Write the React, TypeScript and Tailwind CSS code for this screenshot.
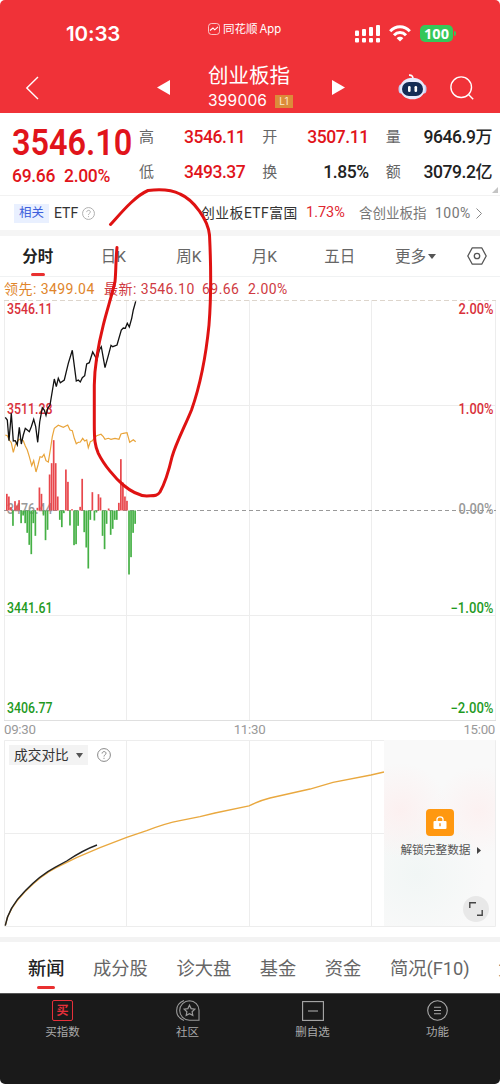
import React from 'react';
import clsx from 'clsx';

const periods = ['分时', '日K', '周K', '月K', '五日'];

const sections = ['新闻', '成分股', '诊大盘', '基金', '资金', '简况(F10)', '大事'];

const quotes = [
  { label: '高', value: '3546.11', up: true },
  { label: '开', value: '3507.11', up: true },
  { label: '量', value: '9646.9', unit: '万', up: false },
  { label: '低', value: '3493.37', up: true },
  { label: '换', value: '1.85%', up: false },
  { label: '额', value: '3079.2', unit: '亿', up: false },
];

const bars = [
  50, 42, 10, -46, 28, 15, 31, -38, -15, -38, -67, -103, -131, -38, -76, 8, 69, 50, -15, -89, -58, 108,
  142, 211, 142, 42, -28, -50, -8, 123, 86, -45, 4, -104, -101, -46, 11, 95, -65, -111, -174, -28, 55,
  -30, -6, 49, 39, -76, -116, -40, 6, -73, -55, -28, -28, 23, 154, 84, 42, 29, -192, -140, -67, -40,
];

const priceLine =
  '5.3,417.3 7.3,420 9,440.7 11.3,413.3 13.3,441 15.3,440.7 17.3,445 19.3,427.3 21.3,444 23.3,435 25.3,428.3 27.3,430 29.3,431.7 31.3,426.7 33.7,419.3 35.7,426.7 37.7,442.3 39.7,422 42.3,407.7 44.3,410 46,415.3 47.7,408.3 50,405 54.3,379 56.3,386.7 58.3,378.3 60.3,382.7 64.3,380 66.3,371.7 68.3,363.3 72.3,350.3 76.3,381 78.3,380 80.3,382 82.3,377.7 84.7,375.7 86.7,364 89.3,362.7 92.7,352 97,359.7 99.3,350 101.3,346.7 105,367.7 108.3,355.7 111,345.3 112.7,346.7 117,345 121.3,330 123.3,328 125.3,328.3 127.3,323.3 129.3,327 131.7,318.3 133.3,310 135.7,301.3';

const leadLine =
  '5.3,435 7.3,435.7 9.3,440 11.3,442.7 13.3,452.3 15.3,445 17.3,441.7 19.3,439.3 23.3,440.7 25.3,446 27.3,450 29.3,456.7 31.7,465.7 33.7,460.7 36,472 38,465 40,456.7 42,457.3 44,454.3 46,460.7 48.3,462 50.3,450 52.3,436.7 54.3,428.3 58.3,425.3 63.3,427.3 67.7,425 70,430 72.3,430.7 74.3,438.3 76.3,443.7 78.3,442.3 80.3,442 82.7,438.3 84.7,441 86.7,440 88.3,447.7 90.3,441.7 92.3,440.7 94.3,438.3 96.7,435.7 101,434.3 103.3,436.7 105,439.3 108.3,438.3 111,439.3 115,438.3 119,439.3 121,434 123.3,433.3 127,432.7 129.7,442.3 133.3,439.7 135.7,441.7';

const priceLabels = [
  { y: 314, price: '3546.11', percent: '2.00%', color: '#d9303a' },
  { y: 413.5, price: '3511.28', percent: '1.00%', color: '#d9303a' },
  { y: 513.5, price: '3476.44', percent: '0.00%', color: '#999999' },
  { y: 613, price: '3441.61', percent: '−1.00%', color: '#1f9a1f' },
  { y: 712.5, price: '3406.77', percent: '−2.00%', color: '#1f9a1f' },
];

const StatusBar: React.FC = () => (
  <div className="flex h-[58px] items-start text-white">
    <div className="ml-[66px] mt-[22px] w-[142px] font-['Inter'] text-[20.5px] leading-6 font-semibold tracking-[-0.1px]">
      10:33
    </div>
    <div className="mt-[21px] flex w-[147px] items-center gap-[3px] text-[11.5px] leading-4 whitespace-nowrap">
      <svg width="12" height="12" viewBox="0 0 12 12" fill="none" stroke="white">
        <rect x=".5" y=".5" width="11" height="11" rx="3" strokeWidth=".7" />
        <path d="M2 7.5 5 5l1.8 1.8L10 3.8" strokeWidth="1.1" />
      </svg>
      <span>
        同花顺<span className="ml-[2px] font-['Inter'] text-[11.3px]">App</span>
      </span>
    </div>
    <svg className="mt-[25px]" width="26" height="18" viewBox="0 0 26 18" fill="white">
      <rect x="0" y="5.5" width="4" height="5.5" rx="1" />
      <rect x="7" y="4" width="4" height="7" rx="1" />
      <rect x="14" y="2" width="4" height="9" rx="1" />
      <rect x="21" y="0" width="4" height="11" rx="1" />
      <rect x="0" y="13" width="4" height="4.5" rx="1" />
      <rect x="7" y="13" width="4" height="4.5" rx="1" />
      <rect x="14" y="13" width="4" height="4.5" rx="1" />
      <rect x="21" y="13" width="4" height="4.5" rx="1" />
    </svg>
    <svg className="mt-[25px] ml-2" width="22" height="17" viewBox="0 0 22 17" fill="none" stroke="white" strokeWidth="3">
      <path d="M1.2 6.2C6.8.4 15.2.4 20.8 6.2" />
      <path d="M5 10.2c3.4-3.5 8.6-3.5 12 0" />
      <path d="M7.7 13.2c1.9-1.9 4.7-1.9 6.6 0L11 16.6z" fill="white" stroke="none" />
    </svg>
    <div className="mt-[25px] ml-[9px] flex h-[17px] w-[33px] items-center justify-center rounded-[5px] bg-[#35c759] font-['Open_Sans'] text-[14.5px] font-bold">
      100
    </div>
    <div className="mt-[31px] ml-px h-[5px] w-[2px] rounded-r bg-[#35c759]" />
  </div>
);

const TitleBar: React.FC = () => (
  <div className="flex h-[55px] items-start text-white">
    <svg className="mt-[18px] ml-[25px]" width="14" height="24" viewBox="0 0 14 24" fill="none" stroke="white" strokeWidth="1.4">
      <path d="M13 1 1.8 12 13 23" />
    </svg>
    <svg className="mt-[22px] ml-[118px]" width="13" height="15" viewBox="0 0 13 15" fill="white">
      <path d="M13 0v15L0 7.5z" />
    </svg>
    <div className="mt-[5px] ml-[38px] w-[124px]">
      <div className="text-[20.5px] leading-[26px]">创业板指</div>
      <div className="flex items-center font-['Inter'] text-[15.5px] leading-[24px] tracking-[0.2px]">
        <span className="w-[67px]">399006</span>
        <span className="flex h-[13px] w-[18px] items-center justify-center bg-[#dc8b3a] text-[10px] leading-none text-[#ffe9c9]">
          L1
        </span>
      </div>
    </div>
    <svg className="mt-[22px]" width="13" height="15" viewBox="0 0 13 15" fill="white">
      <path d="M0 0v15l13-7.5z" />
    </svg>
    <svg className="mt-[15px] ml-[53px]" width="29" height="28" viewBox="0 0 29 28">
      <path d="M15 5.500c0-2.400-1.400-3.600-4-3.400" fill="none" stroke="#fff" strokeWidth="1.6" />
      <ellipse cx="3" cy="16" rx="2.5" ry="4.500" fill="#c4cdf2" />
      <ellipse cx="26" cy="16" rx="2.500" ry="4.500" fill="#c4cdf2" />
      <ellipse cx="14.500" cy="15.500" rx="12.500" ry="10.800" fill="#e6eafc" />
      <rect x="4" y="9" width="21" height="14" rx="7" fill="#142c55" />
      <rect x="10" y="13" width="2.600" height="6" rx="1.200" fill="#fff" />
      <rect x="16.500" y="13" width="2.600" height="6" rx="1.200" fill="#fff" />
    </svg>
    <svg className="mt-[18px] ml-[23px]" width="24" height="24" viewBox="0 0 24 24" fill="none" stroke="white" strokeWidth="1.4">
      <circle cx="11.2" cy="11.2" r="10.3" />
      <path d="m18.5 18.5 4.7 4.7" />
    </svg>
  </div>
);

const QuotePanel: React.FC = () => (
  <div className="relative flex h-[82px] pl-3">
    <div className="w-[127px] text-[#e1141b]">
      <div className="mt-[9px] h-[40px] origin-left scale-x-[.865] text-[37.5px] leading-[40px] font-semibold whitespace-nowrap">
        3546.10
      </div>
      <div className="mt-[4px] flex gap-[10px] text-[17.5px] leading-5 font-medium tracking-[-0.3px]">
        <span className="w-[42px]">69.66</span>
        <span>2.00%</span>
      </div>
    </div>
    <div className="mt-[7px] grid h-[70px] w-[353px] grid-cols-3 gap-x-[17px]">
      {quotes.map((q) => (
        <div key={q.label} className="flex h-[35px] items-center justify-between whitespace-nowrap">
          <span className="text-[15px] text-[#666]">{q.label}</span>
          <span
            className={clsx(
              'text-[17.5px] font-medium tracking-[-0.45px]',
              q.up ? 'text-[#e1141b]' : 'text-[#222]'
            )}
          >
            {q.value}
            {q.unit && <span className="text-[17px]">{q.unit}</span>}
          </span>
        </div>
      ))}
    </div>
    <svg className="absolute right-[2px] bottom-[2px]" width="6" height="6" viewBox="0 0 6 6" fill="#c4c4c4">
      <path d="M6 0v6H0z" />
    </svg>
  </div>
);

const HelpIcon: React.FC<{ size: number; color: string }> = ({ size, color }) => (
  <svg width={size} height={size} viewBox="0 0 14 14" fill="none" stroke={color} strokeWidth="1">
    <circle cx="7" cy="7" r="6.4" />
    <path d="M5.1 5.5C5.1 3 9 3 9 5.3 9 6.8 7 6.8 7 8.5M7 9.8v1.1" />
  </svg>
);

const RelatedEtf: React.FC = () => (
  <div className="flex h-[35px] items-center border-t border-[#f2f2f2] pl-[14px] text-[13.5px] whitespace-nowrap text-[#333]">
    <span className="flex h-[19px] w-[35px] items-center justify-center bg-[#e9f0ff] text-[12.5px] text-[#3c5fdc]">相关</span>
    <span className="ml-[5px] w-[28px] text-[14px]">ETF</span>
    <HelpIcon size={13} color="#aaa" />
    <span className="ml-[106px] w-[105px] text-[13.8px] tracking-[0.5px]">创业板ETF富国</span>
    <span className="w-[53px] text-[14.5px] text-[#df2730]">1.73%</span>
    <span className="w-[76px] text-[#777]">含创业板指</span>
    <span className="w-[41px] text-[14px] tracking-[0.5px] text-[#777]">100%</span>
    <svg width="6" height="11" viewBox="0 0 6 11" fill="none" stroke="#888">
      <path d="m.5.5 5 5-5 5" />
    </svg>
  </div>
);

const PeriodTabs: React.FC = () => (
  <div className="flex h-[41px] border-b border-[#f0f2f3] text-[15.5px] text-[#666]">
    {periods.map((p, i) => (
      <div key={p} className="flex w-[75.5px] flex-col items-center">
        <span className={clsx('mt-[9px] leading-6', i === 0 && 'font-bold text-[#222]')}>{p}</span>
        {i === 0 && <span className="mt-[4px] h-[3px] w-[14px] rounded-full bg-[#e93030]" />}
      </div>
    ))}
    <div className="mt-[9px] flex h-6 w-[76px] items-center justify-center gap-[2px] leading-6">
      更多
      <svg className="-mt-[2px]" width="8" height="5" viewBox="0 0 8 5" fill="#555">
        <path d="M0 0h8L4 5z" />
      </svg>
    </div>
    <svg className="mt-[11px] ml-[13px]" width="20" height="18" viewBox="0 0 20 18" fill="none" stroke="#555" strokeWidth="1.3">
      <path d="M5.3.8h9.4L19.2 9l-4.5 8.2H5.3L.8 9z" strokeLinejoin="round" />
      <circle cx="10" cy="9" r="2.7" />
    </svg>
  </div>
);

const TrendChart: React.FC = () => (
  <>
    <div className="flex h-[23px] items-center pt-px pl-1 text-[14px] tracking-[0.45px] whitespace-nowrap text-[#cf3a42]">
      <span className="w-[100px] text-[#e0852b]">领先: 3499.04</span>
      <span className="w-[98px]">最新: 3546.10</span>
      <span className="w-[46px]">69.66</span>
      <span>2.00%</span>
    </div>
    <svg className="block" width="500" height="421" viewBox="0 300 500 421">
      <g stroke="#ededed" fill="none">
        <path d="M4.5 300v420M126.5 300v420M249.5 300v420M371.5 300v420M495.5 300v420" />
        <path d="M4 405.5h492M4 615.5h492" />
        <path d="M4 720.5h492" stroke="#dfdfdf" />
        <path d="M4 300.5h492" stroke="#ddd5cc" strokeDasharray="5 3" />
      </g>
      <g fontFamily="Roboto" fontSize="14" fontWeight="500">
        {priceLabels.map((l) => (
          <g key={l.price} fill={l.color}>
            <text x="7" y={l.y} textLength="45.5" lengthAdjust="spacingAndGlyphs">
              {l.price}
            </text>
            <text
              x="493.5"
              y={l.y}
              textAnchor="end"
              textLength={l.percent.length > 5 ? 43 : 35}
              lengthAdjust="spacingAndGlyphs"
            >
              {l.percent}
            </text>
          </g>
        ))}
      </g>
      <path d="M4 510.5h492" stroke="#999" strokeDasharray="4 3" />
      {bars.map((v, i) => (
        <rect
          key={i}
          x={6 + i * 2.036}
          y={v > 0 ? 510.5 - v / 3 : 510.5}
          width="1.7"
          height={Math.abs(v) / 3}
          fill={v > 0 ? '#e8474c' : '#45b045'}
        />
      ))}
      <polyline points={leadLine} fill="none" stroke="#e9a43a" strokeWidth="1.2" />
      <polyline points={priceLine} fill="none" stroke="#111" strokeWidth="1.3" />
    </svg>
    <div className="flex h-[19px] items-center justify-between pr-[5px] pb-px pl-1 text-[13.3px] tracking-[-0.3px] text-[#999]">
      <span>09:30</span>
      <span>11:30</span>
      <span>15:00</span>
    </div>
  </>
);

const VolumeCompare: React.FC = () => (
  <div className="relative h-[197px]">
    <svg className="block" width="500" height="188" viewBox="0 740 500 188" fill="none">
      <g stroke="#ededed">
        <path d="M4.5 740.5h491v186H4.5zM126.5 740v187M249.5 740v187M371.5 740v187M4 833.5h492" />
      </g>
      <path
        d="M5.3 925.3C7 915 12 905 25 891.7 35 881.5 48 871.5 56.7 867.3 68 861.5 88 852.5 100 847.7L126.7 837.3 146.7 830.7C155 827.5 170 822.5 180 820.7L200 816.7 215 813 249 805.8 C256 802.5 262 800 270 798L310 789 333 782.3 371 775 384 772"
        stroke="#e9a83f"
        strokeWidth="1.3"
      />
      <path d="M5.3 925.7C7 915 12 904 25 891 35 880.5 46 872 55 867.3L66.7 861C75 855.5 86 849 97 845" stroke="#222" strokeWidth="1.4" />
    </svg>
    <div className="absolute top-[5px] left-[9px] flex h-[20px] items-center text-[13.7px] text-[#333]">
      <div className="flex h-[20px] w-[79px] items-center gap-[7px] bg-[#f3f3f3] pl-[5px] whitespace-nowrap">
        成交对比
        <svg width="7" height="5" viewBox="0 0 7 5" fill="#555">
          <path d="M0 0h7L3.5 5z" />
        </svg>
      </div>
      <span className="ml-[9px]">
        <HelpIcon size={14} color="#888" />
      </span>
    </div>
    {/* Locked area */}
    <div className="absolute top-0 left-[384px] flex h-[186px] w-[111px] flex-col items-center bg-[#f9f9f9] bg-[radial-gradient(circle_at_15%_38%,#fcf0f0_0,transparent_32%),radial-gradient(circle_at_85%_38%,#fcf1f1_0,transparent_30%),radial-gradient(circle_at_30%_72%,#f1f6f5_0,transparent_45%)]">
      <div className="mt-[69px] flex h-[27px] w-[28px] items-center justify-center rounded bg-[#ff9810]">
        <svg width="14" height="13" viewBox="0 0 14 13">
          <path d="M4 5.5V3.2C4 .2 10 .2 10 3.2v2.3" fill="none" stroke="#fff" strokeWidth="1.3" />
          <rect x=".5" y="5" width="13" height="8" rx="1" fill="#fff" />
          <path d="M7 7.3v3" stroke="#f08a10" strokeWidth="1.3" />
        </svg>
      </div>
      <div className="mt-[5px] flex items-center gap-[6px] pl-[2px] text-[11.7px] leading-[18px] whitespace-nowrap text-[#555]">
        解锁完整数据
        <svg width="4" height="7" viewBox="0 0 4 7" fill="#444">
          <path d="M0 0v7l4-3.5z" />
        </svg>
      </div>
      <div className="absolute right-[6px] bottom-[4px] flex size-[26px] items-center justify-center rounded-full bg-[#e8e8e8]">
        <svg width="14" height="14" viewBox="0 0 14 14" fill="none" stroke="#444" strokeWidth="1.4">
          <path d="M.8 6V.8H7M13.2 8v5.2H8" />
        </svg>
      </div>
    </div>
  </div>
);

const SectionTabs: React.FC = () => (
  <div className="flex h-[51px] gap-[28.5px] overflow-hidden border-t-[5px] border-[#f3f3f3] box-content pl-7 text-[18.3px] whitespace-nowrap text-[#666]">
    {sections.map((s, i) => (
      <div key={s} className="flex shrink-0 flex-col items-center">
        <span className={clsx('mt-[13px] leading-7', i === 0 && 'font-medium text-[#222]')}>{s}</span>
        {i === 0 && <span className="mt-[3px] h-[3px] w-[18px] rounded-full bg-[#e93030]" />}
      </div>
    ))}
  </div>
);

const actions = [
  {
    label: '买指数',
    icon: (
      <div className="flex size-[21px] items-center justify-center rounded-[2px] border-[1.5px] border-[#e5303a] text-[12px] leading-none font-bold text-[#e5303a]">
        买
      </div>
    ),
  },
  {
    label: '社区',
    icon: (
      <svg width="24" height="21" viewBox="0 0 24 21" fill="none" stroke="#999" strokeWidth="1.1">
        <path d="M13.5.7a9.8 9.8 0 1 0 0 19.6H23V10.5A9.6 9.6 0 0 0 13.5.7z" />
        <path d="M8 .6C-1.8 4.5-1.8 16.5 8 20.4" />
        <path d="m13.5 5.2 1.6 3.4 3.7.5-2.7 2.6.7 3.7-3.3-1.8-3.3 1.8.7-3.7-2.7-2.6 3.7-.5z" strokeWidth="1.2" />
      </svg>
    ),
  },
  {
    label: '删自选',
    icon: (
      <svg width="22" height="20" viewBox="0 0 22 20" fill="none" stroke="#aaa" strokeWidth="1.1">
        <rect x=".6" y=".6" width="20.8" height="18.8" />
        <path d="M6 10h10" />
      </svg>
    ),
  },
  {
    label: '功能',
    icon: (
      <svg width="21" height="21" viewBox="0 0 21 21" fill="none" stroke="#aaa" strokeWidth="1.1">
        <circle cx="10.5" cy="10.5" r="9.8" />
        <path d="M7 7.3h7M7 10.5h7M7 13.7h7" />
      </svg>
    ),
  },
];

const BottomBar: React.FC = () => (
  <div className="grid h-[91px] grid-cols-4 rounded-b-[5px] border-t border-[#555] bg-[#1a1a1a] text-[11.5px] text-[#aaa]">
    {actions.map((a) => (
      <div key={a.label} className="flex flex-col items-center">
        <div className="mt-[6px] flex h-[21px] items-center">{a.icon}</div>
        <span className="mt-[3px] leading-4">{a.label}</span>
      </div>
    ))}
  </div>
);

export default function App() {
  return (
    <div className="relative h-[1084px] w-[500px] overflow-hidden bg-white font-['Roboto','Noto_Sans_CJK_SC',sans-serif]">
      <header className="h-[113px] rounded-t-[5px] bg-[#f03238]">
        <StatusBar />
        <TitleBar />
      </header>
      <QuotePanel />
      <RelatedEtf />
      <div className="h-[6px] bg-[#f5f5f5]" />
      <PeriodTabs />
      <TrendChart />
      <VolumeCompare />
      <SectionTabs />
      <BottomBar />

      {/* Hand-drawn marker */}
      <svg
        className="pointer-events-none absolute top-0 left-0"
        width="500"
        height="1084"
        viewBox="0 0 500 1084"
        fill="none"
        stroke="#df1212"
        strokeWidth="3"
        strokeLinecap="round"
        strokeLinejoin="round"
      >
        <path d="M110.5 224.5C121 213 135 196 148 190.5 160 189 172 190 180 194 194 200 208 220 209.5 235 211 265 211 300 209 325 206 355 200 386 191.5 410 185 426 176 443 172 457 169 470 165 483 160 492 157 496.500 153 495.500 146.700 496 137 495.500 128 489 123.300 485 115 478 104 465 98.300 453.300 95 446 94.300 440 94.300 425V385C94.500 372 97 350 103.300 325 107 310 112 295 115 281.700 116 272 115.700 260 117 247.500" />
      </svg>
    </div>
  );
}
